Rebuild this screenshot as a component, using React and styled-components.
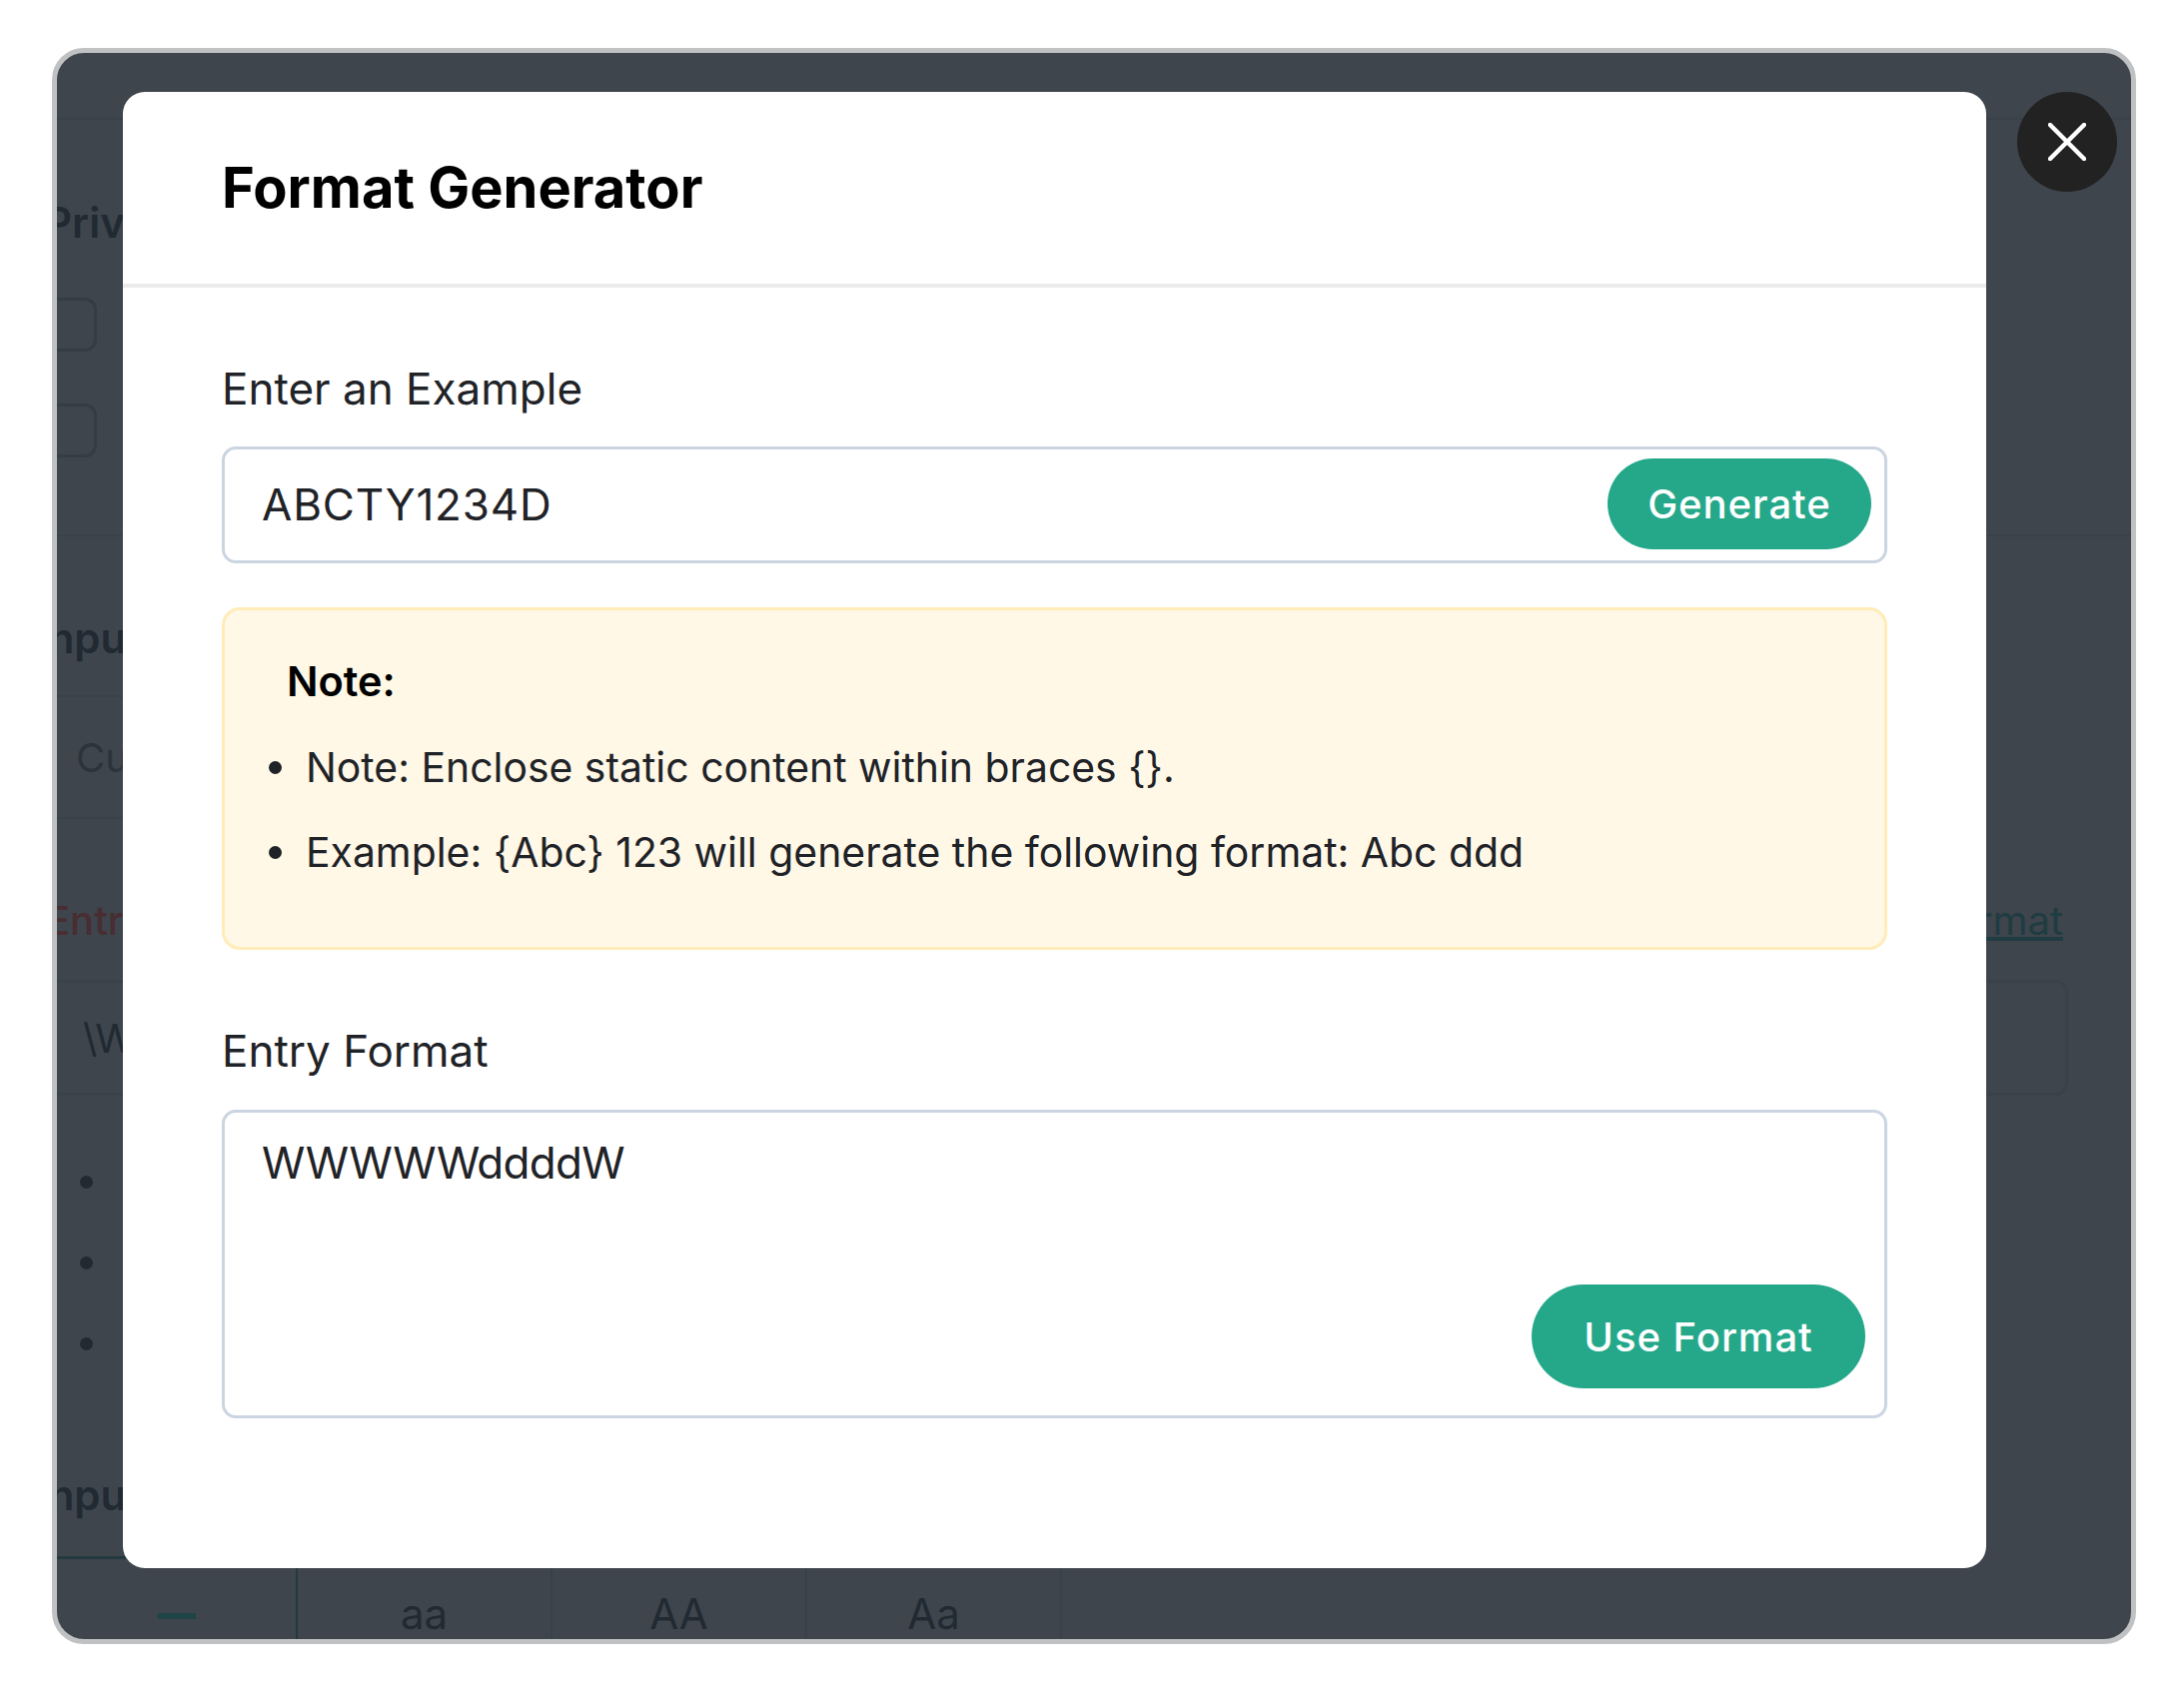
import styled, { createGlobalStyle } from 'styled-components';

const GlobalStyle = createGlobalStyle`
	html, body {
		margin: 0;
		padding: 0;
		background: #ffffff;
	}
	* {
		box-sizing: border-box;
	}
`

const App = () => {
	return (
		<Page>
			<GlobalStyle />
			<Frame>
				<Behind>
					<TopBar />
					<PrivacySection>
						<BehindTitle>Privacy</BehindTitle>
						<GhostBox />
						<GhostBox />
					</PrivacySection>
					<InputHead>
						<BehindTitle>Input</BehindTitle>
					</InputHead>
					<CustomRow>Custom</CustomRow>
					<FormatHead>
						<RedTitle>Entry Format</RedTitle>
						<FormatLink>Use Format</FormatLink>
					</FormatHead>
					<FormatBox>\W</FormatBox>
					<GhostList>
						<GhostDot />
						<GhostDot />
						<GhostDot />
					</GhostList>
					<CaseHead>
						<BehindTitle>Input</BehindTitle>
					</CaseHead>
					<CaseRow>
						<CaseCell $first><CaseDash /></CaseCell>
						<CaseCell>aa</CaseCell>
						<CaseCell>AA</CaseCell>
						<CaseCell>Aa</CaseCell>
					</CaseRow>
				</Behind>
				<Overlay>
					<Modal>
						<ModalHeader>
							<Title>Format Generator</Title>
						</ModalHeader>
						<ModalBody>
							<Label>Enter an Example</Label>
							<ExampleField>
								<FieldText $spacing="0.8px">ABCTY1234D</FieldText>
								<GenerateButton type="button">Generate</GenerateButton>
							</ExampleField>
							<NoteBox>
								<NoteTitle>Note:</NoteTitle>
								<NoteList>
									<NoteItem>Note: Enclose static content within braces {'{}'}.</NoteItem>
									<NoteItem>Example: {'{Abc}'} 123 will generate the following format: Abc ddd</NoteItem>
								</NoteList>
							</NoteBox>
							<EntryLabel>Entry Format</EntryLabel>
							<FormatField>
								<FieldText $spacing="-0.7px">WWWWWddddW</FieldText>
								<UseButton type="button">Use Format</UseButton>
							</FormatField>
						</ModalBody>
					</Modal>
					<CloseButton type="button" aria-label="Close">
						<svg width="38" height="38" viewBox="0 0 38 38" fill="none" stroke="#ffffff" strokeWidth="4.5" strokeLinecap="round">
							<path d="M2 2 L36 36 M36 2 L2 36" />
						</svg>
					</CloseButton>
				</Overlay>
			</Frame>
		</Page>
	)
}

export default App;

const Page = styled.div`
	width: 2186px;
	height: 1691px;
	padding: 48px 48px 45px 52px;
	font-family: 'Inter', 'Liberation Sans', sans-serif;
	overflow: hidden;
`

const Frame = styled.div`
	position: relative;
	width: 100%;
	height: 100%;
	border: 5px solid #bfc1c3;
	border-radius: 32px;
	background: #3e454c;
	overflow: hidden;
`

const Behind = styled.div`
	display: flex;
	flex-direction: column;
	color: #212a33;
	font-size: 40px;
	line-height: 52px;
`

const TopBar = styled.div`
	height: 67px;
	border-bottom: 2px solid #39424a;
`

const PrivacySection = styled.div`
	display: flex;
	flex-direction: column;
	height: 417px;
	padding: 77px 0 0 0;
	margin-left: -12px;
	border-bottom: 2px solid #39424a;
`

const BehindTitle = styled.div`
	font-weight: 600;
	font-size: 42px;
`

const GhostBox = styled.div`
	width: 52px;
	height: 54px;
	margin-bottom: 52px;
	border: 3px solid #343c44;
	border-left: none;
	border-radius: 0 12px 12px 0;

	${BehindTitle} + & {
		margin-top: 49px;
	}
`

const InputHead = styled.div`
	width: 1500px;
	height: 161px;
	padding-top: 76px;
	margin-left: -20px;
	border-bottom: 2px solid #39424a;
`

const CustomRow = styled.div`
	width: 1500px;
	height: 122px;
	padding: 35px 0 0 19px;
	color: #2b343c;
	border-bottom: 2px solid #39424a;
`

const FormatHead = styled.div`
	display: flex;
	justify-content: space-between;
	align-items: center;
	height: 161px;
	padding: 42px 68px 0 0;
	margin-left: -11px;
`

const RedTitle = styled.div`
	font-weight: 500;
	color: #482d33;
`

const FormatLink = styled.div`
	color: #1f3c42;
	text-decoration: underline;
`

const FormatBox = styled.div`
	width: 2013px;
	height: 116px;
	padding: 30px 0 0 26px;
	border: 3px solid #39424a;
	border-left: none;
	border-radius: 0 12px 12px 0;
`

const GhostList = styled.div`
	display: flex;
	flex-direction: column;
	gap: 68px;
	height: 365px;
	padding: 80px 0 0 23px;
`

const GhostDot = styled.div`
	width: 13px;
	height: 13px;
	border-radius: 50%;
	background: #212a33;
`

const CaseHead = styled.div`
	height: 96px;
	padding-top: 9px;
	margin-left: -20px;
`

const CaseRow = styled.div`
	display: flex;
	width: 1006px;
	height: 85px;
	border-top: 3px solid #24393f;
	font-size: 42px;
`

const CaseCell = styled.div`
	display: flex;
	align-items: center;
	justify-content: center;
	width: ${p => (p.$first ? '241px' : '255px')};
	padding-top: 28px;
	border-right: 2px solid ${p => (p.$first ? '#24393f' : '#39424a')};
`

const CaseDash = styled.div`
	width: 38px;
	height: 6px;
	margin-top: 4px;
	background: #1f4447;
`

const Overlay = styled.div`
	position: absolute;
	top: 0;
	left: 0;
	display: flex;
	align-items: flex-start;
	gap: 31px;
	padding: 39px 0 0 66px;
`

const Modal = styled.div`
	flex: none;
	width: 1865px;
	height: 1478px;
	background: #ffffff;
	border-radius: 22px;
	overflow: hidden;
`

const ModalHeader = styled.div`
	display: flex;
	align-items: center;
	height: 196px;
	padding: 0 0 0 99px;
	border-bottom: 4px solid #ebebeb;
`

const Title = styled.h2`
	margin: 0;
	font-size: 56px;
	line-height: 68px;
	font-weight: 700;
	color: #000000;
`

const ModalBody = styled.div`
	display: flex;
	flex-direction: column;
	padding: 75px 99px 0 99px;
`

const Label = styled.div`
	height: 52px;
	margin-bottom: 32px;
	font-size: 44px;
	line-height: 52px;
	color: #1f2327;
`

const EntryLabel = styled(Label)`
	margin-top: 75px;
	margin-bottom: 33px;
`

const ExampleField = styled.div`
	display: flex;
	align-items: center;
	justify-content: space-between;
	height: 117px;
	padding: 0 13px 2px 37px;
	border: 3px solid #cbd5e1;
	border-radius: 14px;
`

const FieldText = styled.div`
	font-size: 44px;
	line-height: 52px;
	letter-spacing: ${p => p.$spacing};
	color: #1f2327;
`

const GreenButton = styled.button`
	border: none;
	color: #ffffff;
	background: #25a88a;
	font-family: inherit;
	font-weight: 500;
	cursor: pointer;
`

const GenerateButton = styled(GreenButton)`
	width: 264px;
	height: 91px;
	padding-bottom: 2px;
	border-radius: 46px;
	font-size: 40px;
	letter-spacing: 1px;
`

const UseButton = styled(GreenButton)`
	align-self: flex-end;
	width: 334px;
	height: 104px;
	margin-top: auto;
	border-radius: 52px;
	font-size: 40px;
	letter-spacing: 1px;
`

const NoteBox = styled.div`
	height: 343px;
	margin-top: 44px;
	padding: 45px 0 0 62px;
	background: #fff8e7;
	border: 3px solid #ffecb8;
	border-radius: 18px;
`

const NoteTitle = styled.div`
	font-size: 41.5px;
	line-height: 52px;
	font-weight: 600;
	color: #000000;
`

const NoteList = styled.ul`
	display: flex;
	flex-direction: column;
	gap: 33px;
	margin: 34px 0 0 -18px;
	padding: 0;
	list-style: none;
`

const NoteItem = styled.li`
	display: flex;
	align-items: center;
	gap: 24px;
	font-size: 40.9px;
	line-height: 52px;
	color: #1f2327;

	&::before {
		content: '';
		flex: none;
		width: 13px;
		height: 13px;
		border-radius: 50%;
		background: #1f2327;
	}
`

const FormatField = styled.div`
	display: flex;
	flex-direction: column;
	height: 309px;
	padding: 24px 19px 27px 37px;
	border: 3px solid #cbd5e1;
	border-radius: 14px;
`

const CloseButton = styled.button`
	display: flex;
	align-items: center;
	justify-content: center;
	flex: none;
	width: 100px;
	height: 100px;
	padding: 0;
	border: none;
	border-radius: 50%;
	background: #222222;
	cursor: pointer;
`
